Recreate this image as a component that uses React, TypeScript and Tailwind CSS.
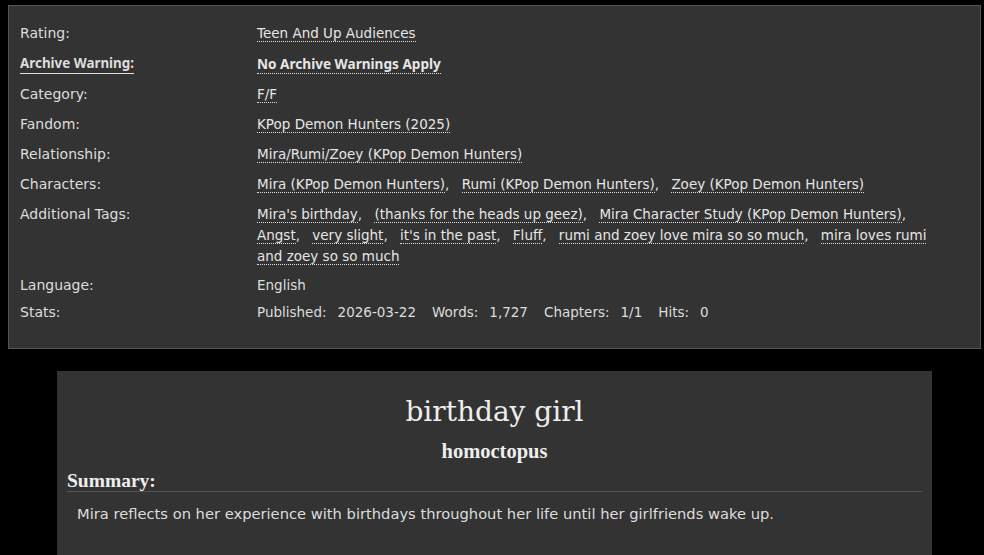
const Tag = ({ children, bold = false }: { children: React.ReactNode; bold?: boolean }) => (
    <a className={`border-b border-dotted border-[#ddd] text-[#e6e6e6] ${bold ? "font-bold font-['Noto_Sans',sans-serif] text-[13.6px]" : ""}`}>{children}</a>
);

const TagList = ({ tags }: { tags: string[] }) => (
    <span>
        {tags.map((t, i) => (
            <span key={t}>
                <Tag>{t}</Tag>
                {i < tags.length - 1 ? <span className="mr-[8px]">,</span> : null}{" "}
            </span>
        ))}
    </span>
);

const Row = ({ label, children, strong = false, className = "" }: { label: string; children: React.ReactNode; strong?: boolean; className?: string }) => (
    <div className={`flex ${className}`}>
        <div className="w-[237px] shrink-0 text-[14px]">
            {strong ? (
                <span className="font-bold font-['Noto_Sans',sans-serif] text-[13.4px] border-b border-[#ddd] pb-[1px]">{label}</span>
            ) : (
                <span>{label}</span>
            )}
        </div>
        <div className="flex-1 pr-[30px]">{children}</div>
    </div>
);

const Stat = ({ label, value, last = false }: { label: string; value: string; last?: boolean }) => (
    <>
        <span className="mr-[11px]">{label}</span>
        <span className={last ? "" : "mr-[16px]"}>{value}</span>
    </>
);

export default function App() {
    const chars = ["Mira (KPop Demon Hunters)", "Rumi (KPop Demon Hunters)", "Zoey (KPop Demon Hunters)"];
    const extra = [
        "Mira's birthday",
        "(thanks for the heads up geez)",
        "Mira Character Study (KPop Demon Hunters)",
        "Angst",
        "very slight",
        "it's in the past",
        "Fluff",
        "rumi and zoey love mira so so much",
        "mira loves rumi and zoey so so much",
    ];
    return (
        <div className="min-h-[555px] bg-black pt-[5px] font-['DejaVu_Sans',sans-serif] text-[13.5px] text-[#ddd]">
            <div className="mx-[8px] mr-[3px] bg-[#333] border border-[#555] px-[11px] pt-[17px] pb-[25px] flex flex-col gap-[9px] leading-[21px]">
                <Row label="Rating:"><Tag>Teen And Up Audiences</Tag></Row>
                <Row label="Archive Warning:" strong><Tag bold>No Archive Warnings Apply</Tag></Row>
                <Row label="Category:"><Tag>F/F</Tag></Row>
                <Row label="Fandom:"><Tag>KPop Demon Hunters (2025)</Tag></Row>
                <Row label="Relationship:"><Tag>Mira/Rumi/Zoey (KPop Demon Hunters)</Tag></Row>
                <Row label="Characters:"><TagList tags={chars} /></Row>
                <Row label="Additional Tags:"><TagList tags={extra} /></Row>
                <Row label="Language:" className="-mt-[1px]"><span>English</span></Row>
                <Row label="Stats:" className="-mt-[3px]">
                    <div className="flex">
                        <Stat label="Published:" value="2026-03-22" />
                        <Stat label="Words:" value="1,727" />
                        <Stat label="Chapters:" value="1/1" />
                        <Stat label="Hits:" value="0" last />
                    </div>
                </Row>
            </div>
            <div className="mt-[22px] w-[875px] ml-[57px] bg-[#333] px-[10px] pt-[19px] pb-[40px]">
                <h2 className="text-center font-['DejaVu_Serif',serif] text-[28px] leading-[44px] text-[#eee]">birthday girl</h2>
                <h3 className="mt-[5px] text-center font-['Liberation_Serif',serif] font-bold text-[20.5px] leading-[24px] text-[#eee]">homoctopus</h3>
                <h3 className="mt-[7px] font-['Liberation_Serif',serif] font-bold text-[19.5px] leading-[21px] text-[#eee] border-b border-[#555]">Summary:</h3>
                <p className="mt-[12px] pl-[10px] text-[14.7px] leading-[20px] text-[#ddd]">Mira reflects on her experience with birthdays throughout her life until her girlfriends wake up.</p>
            </div>
        </div>
    );
}
